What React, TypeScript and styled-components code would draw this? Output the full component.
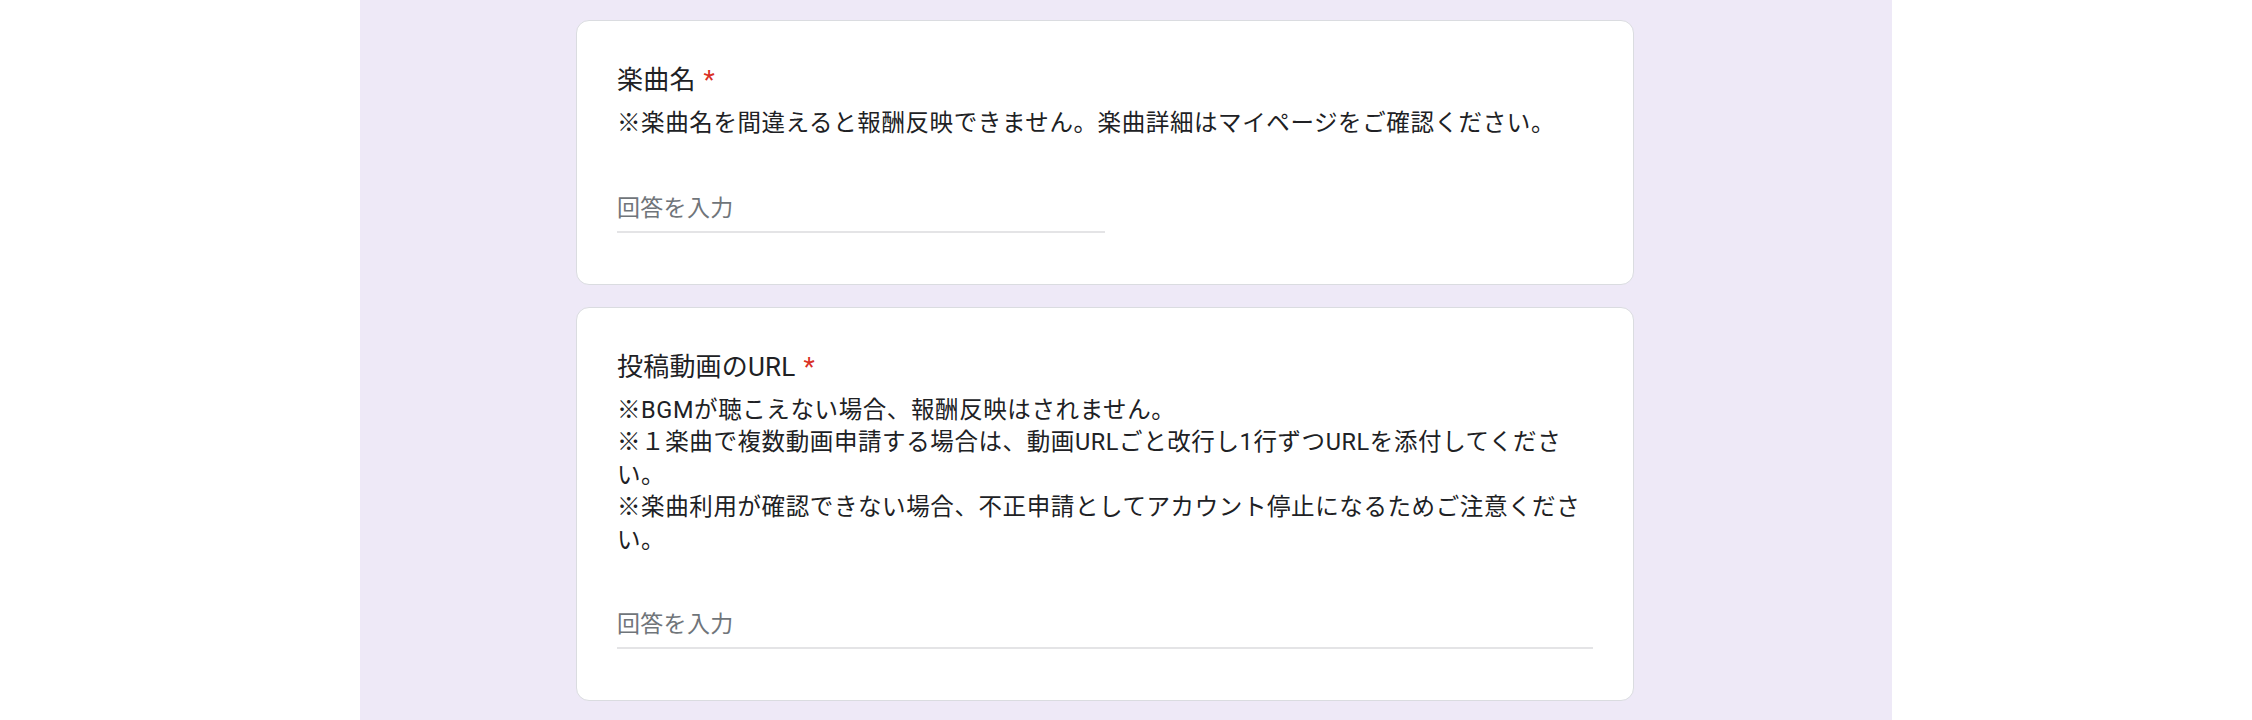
import React from "react";
import styled, { createGlobalStyle } from "styled-components";

const GlobalStyle = createGlobalStyle`
  html, body {
    margin: 0;
    padding: 0;
    background: #ffffff;
  }
  body {
    font-family: Roboto, "Noto Sans CJK JP", sans-serif;
    color: #202124;
  }
`;

const Page = styled.main`
  width: 1532px;
  height: 720px;
  overflow: hidden;
  margin: 0 auto;
  box-sizing: border-box;
  padding: 20px 0 0 216px;
  background: #eee9f7;
  display: flex;
  flex-direction: column;
  gap: 22px;
`;

const Card = styled.section`
  width: 1058px;
  flex-shrink: 0;
  box-sizing: border-box;
  background: #ffffff;
  border: 1px solid #dadce0;
  border-radius: 13px;
  padding: 39px 40px;
  display: flex;
  flex-direction: column;
`;

const Title = styled.div`
  font-size: 26px;
  line-height: 40px;
  letter-spacing: 0.2px;
  color: #202124;
`;

const Required = styled.span`
  color: #d93025;
  padding-left: 8px;
`;

const Description = styled.div`
  margin-top: 7px;
  font-size: 23.5px;
  line-height: 32.5px;
  letter-spacing: 0.6px;
  white-space: pre-line;
  color: #202124;
`;

const Field = styled.input<{ $full?: boolean }>`
  display: block;
  width: ${(p) => (p.$full ? "100%" : "50%")};
  box-sizing: border-box;
  margin: 52px 0 12px;
  padding: 0 0 6px;
  height: 41px;
  border: none;
  border-bottom: 2px solid #e4e4e6;
  background: transparent;
  outline: none;
  font-family: Roboto, "Noto Sans CJK JP", sans-serif;
  font-size: 23px;
  line-height: 33px;
  letter-spacing: 0.3px;
  color: #202124;

  &::placeholder {
    color: #70757a;
    opacity: 1;
  }
`;

type Question = {
  title: string;
  description: string;
  full?: boolean;
};

const questions: Question[] = [
  {
    title: "楽曲名",
    description:
      "※楽曲名を間違えると報酬反映できません。楽曲詳細はマイページをご確認ください。",
  },
  {
    title: "投稿動画のURL",
    description:
      "※BGMが聴こえない場合、報酬反映はされません。\n※１楽曲で複数動画申請する場合は、動画URLごと改行し1行ずつURLを添付してください。\n※楽曲利用が確認できない場合、不正申請としてアカウント停止になるためご注意ください。",
    full: true,
  },
];

export default function App() {
  return (
    <>
      <GlobalStyle />
      <Page>
        {questions.map((q) => (
          <Card key={q.title}>
            <Title>
              {q.title}
              <Required>*</Required>
            </Title>
            <Description>{q.description}</Description>
            <Field $full={q.full} placeholder="回答を入力" readOnly />
          </Card>
        ))}
      </Page>
    </>
  );
}
